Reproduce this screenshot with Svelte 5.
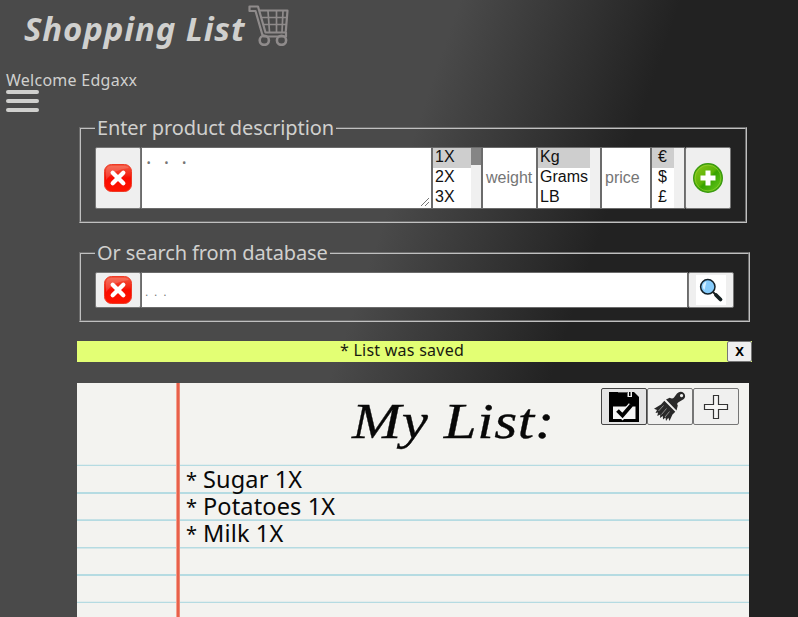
<script>
  const quantities = ['1X', '2X', '3X'];
  const units = ['Kg', 'Grams', 'LB'];
  const currencies = ['€', '$', '£'];
  const items = ['Sugar 1X', 'Potatoes 1X', 'Milk 1X'];
</script>

{#snippet clearIcon()}
  <svg width="30" height="30" viewBox="0 0 30 30">
    <defs>
      <linearGradient id="red" x1="0" y1="0" x2="0" y2="1">
        <stop offset="0" stop-color="#f4583f" />
        <stop offset=".4" stop-color="#f32414" />
        <stop offset=".5" stop-color="#f90b00" />
        <stop offset="1" stop-color="#ff1400" />
      </linearGradient>
    </defs>
    <rect x="1.5" y="1.5" width="27" height="27" rx="7" fill="url(#red)" stroke="#ee3a26" />
    <path d="M3 17V8q0-5 5-5h14q3 0 4 2Q11 6 3 17z" fill="#fff" opacity=".16" />
    <path d="M9.700 9.700l10.600 10.600M20.300 9.700L9.700 20.300" stroke="#fff" stroke-width="4.300" stroke-linecap="round" />
  </svg>
{/snippet}

{#snippet listbox(options, cls, thumb)}
  <div class="listbox {cls}">
    <div class="options">
      {#each options as option, i}
        <div class="option" class:selected={i === 0}>{option}</div>
      {/each}
    </div>
    <div class="track">{#if thumb}<div class="thumb"></div>{/if}</div>
  </div>
{/snippet}

<div class="page">
  <header>
    <h1>Shopping List</h1>
    <svg class="cart" width="42" height="41" viewBox="0 0 42 41" fill="none" stroke="#8f8b8b">
      <path d="M1.500 1.500h8.500l7.500 26h20.500v4H17.500q-3 0-3.500-3L7.500 6h-6zM11.300 5.500H39.500l-1.700 21" stroke-width="2.200" stroke-linejoin="round" />
      <path d="M20 6l1.500 21M28.500 6v21M35 6l-1 21M13.500 12.500h25.500M15.500 19.500h23" stroke-width="1.700" />
      <circle cx="16.300" cy="35.300" r="4.600" stroke-width="2.600" />
      <circle cx="33.500" cy="35.300" r="4.600" stroke-width="2.600" />
    </svg>
  </header>
  <div class="welcome">Welcome Edgaxx</div>
  <div class="menu"><i></i><i></i><i></i></div>

  <main>
    <fieldset class="describe">
      <legend>Enter product description</legend>
      <div class="row">
        <button class="side">{@render clearIcon()}</button>
        <div class="area">
          <span>. . .</span>
          <svg width="10" height="10" viewBox="0 0 10 10" stroke="#777"><path d="M1 9L9 1M5 9L9 5" /></svg>
        </div>
        {@render listbox(quantities, 'qty', true)}
        <div class="field weight">weight</div>
        {@render listbox(units, 'unit', false)}
        <div class="field price">price</div>
        {@render listbox(currencies, 'cur', false)}
        <button class="side">
          <svg width="32" height="32" viewBox="0 0 32 32">
            <defs>
              <linearGradient id="green" x1="0" y1="0" x2="1" y2="1">
                <stop offset="0" stop-color="#8fc61c" />
                <stop offset=".48" stop-color="#59b306" />
                <stop offset=".54" stop-color="#36a200" />
                <stop offset="1" stop-color="#70d020" />
              </linearGradient>
            </defs>
            <circle cx="16" cy="16" r="14.300" fill="url(#green)" stroke="#3b9a10" stroke-width="1.400" />
            <circle cx="16" cy="16" r="12.900" fill="none" stroke="#a5da3b" stroke-width="1" opacity=".5" />
            <path d="M16 8.500v15M8.500 16h15" stroke="#fff" stroke-width="5" />
          </svg>
        </button>
      </div>
    </fieldset>

    <fieldset class="search">
      <legend>Or search from database</legend>
      <div class="row">
        <button class="side">{@render clearIcon()}</button>
        <div class="field query">. . .</div>
        <button class="side">
          <svg class="lens" width="30" height="30" viewBox="0 0 30 30">
            <rect width="30" height="30" fill="#fff" />
            <path d="M17 17l3 3" stroke="#222" stroke-width="2" />
            <path d="M20 20l4.500 4.500" stroke="#152022" stroke-width="3.800" stroke-linecap="round" />
            <circle cx="11.800" cy="11.800" r="7.200" fill="#86cbfb" stroke="#132028" stroke-width="1.500" />
            <path d="M7 13q-1-5 3.500-6.500L8.500 15z" fill="#d4efff" />
          </svg>
        </button>
      </div>
    </fieldset>

    <div class="notice">
      <div class="message">* List was saved</div>
      <button>X</button>
    </div>

    <section class="paper">
      <h2><span>My List:</span></h2>
      <div class="tools">
        <button class="active">
          <svg width="32" height="32" viewBox="0 0 32 32">
            <path d="M1 1h25l5 5v25H1z" fill="#000" />
            <path d="M19.500 1h4.500v5h-4.500z" fill="#eee" />
            <path d="M21 1h1.500v4H21z" fill="#000" />
            <path d="M10 1h9.500v1H10z" fill="#555" />
            <path d="M5 15.500h22.500V28H5z" fill="#f5f5f5" />
            <path d="M10 20l4.500 4.500 9-10" stroke="#f5f5f5" stroke-width="7" fill="none" />
            <path d="M9.500 19.500l5 5 9-10.500" stroke="#000" stroke-width="3.800" fill="none" />
          </svg>
        </button>
        <button>
          <svg width="34" height="34" viewBox="0 0 34 34" fill="#292929">
            <path fill-rule="evenodd" d="M13 9.500L16.700 7.800Q19.500 9.500 21 7.500L24 3.500Q27.500.3 31 3.200Q33.500 6.500 30.500 9.300Q28 11 25.500 12.200Q23.300 13.500 24.800 15.500L23.500 20.500zM28.500 4a1.600 1.600 0 1 0 .1 0z" />
            <path d="M11.300 10.800L22.300 21.700L19.500 24.500L16.500 31L15.300 27.800L13 31L12.500 27.500L10 29.500L9.800 26L7 28L7.300 24.500L4.300 26L5 22.500L2.500 23L4 20L1 18.800L8 14.500z" />
            <path d="M10.500 15.500l-5 5.500M13.500 18.500l-5 6M16.500 21.500l-4.500 5.500" stroke="#f0f0ef" stroke-width=".5" />
          </svg>
        </button>
        <button>
          <svg width="26" height="26" viewBox="0 0 26 26"><path d="M10.500 1.500h5v9h9v5h-9v9h-5v-9h-9v-5h9z" fill="#f6f6f5" stroke="#333" stroke-width="1.200" /></svg>
        </button>
      </div>
      <ul>
        {#each items as item}
          <li><span class="star">*</span><span class="name">{item}</span></li>
        {/each}
      </ul>
    </section>
  </main>
</div>

<style>
  :global(body) { margin: 0; overflow: hidden; }
  .page {
    box-sizing: border-box;
    width: 798px;
    height: 617px;
    overflow: hidden;
    color: #d0d0ce;
    font-family: 'Noto Sans', 'Open Sans', sans-serif;
    background: linear-gradient(109deg, #4a4a4a 435px, #222 644px);
  }
  header { display: flex; height: 70px; padding-left: 24px; }
  h1 { margin: 7px 0 0; width: 224px; font-size: 33px; line-height: 44px; font-style: italic; font-weight: 700; letter-spacing: .850px; white-space: nowrap; }
  .cart { margin-top: 5px; }
  .welcome { height: 20px; padding-left: 6px; font-size: 16px; line-height: 20px; letter-spacing: .26px; }
  .menu { display: flex; flex-direction: column; gap: 5px; width: 33px; margin-left: 6px; }
  .menu i { height: 4px; border-radius: 2px; background: #d0d0ce; }
  main { margin-left: 77px; padding-top: 6px; width: 675px; }
  fieldset { box-sizing: border-box; margin: 0 0 0 2px; padding: 0 14px; border: 2px groove #c0c0c0; min-width: 0; }
  legend { padding: 0 2px; margin: 0; font-size: 20px; line-height: 20px; letter-spacing: -.11px; white-space: nowrap; }
  .describe { width: 668px; height: 105px; }
  .search { width: 671px; height: 79px; margin-top: 20px; }
  .row { display: flex; margin-top: 9px; width: 636px; height: 62px; }
  .search .row { width: 639px; height: 36px; }
  button { box-sizing: border-box; padding: 0; display: flex; align-items: center; justify-content: center; border: 1px solid #767676; border-radius: 2px; background: #efefef; color: #000; flex: none; }
  .side { width: 46px; }
  .area, .field, .listbox { box-sizing: border-box; border: 1px solid #6b6b6b; background: #fff; flex: none; }
  .area { width: 291px; display: flex; align-items: flex-end; justify-content: space-between; padding: 0 1px 1px 4px; color: #757575; font: 20px/24px 'Noto Sans', sans-serif; }
  .area span { align-self: flex-start; margin-top: -3px; letter-spacing: 3.600px; }
  .listbox { display: flex; color: #111; font: 16px/20px 'Liberation Sans', Arial, sans-serif; overflow: hidden; }
  .options { flex: 1; }
  .option { height: 20px; line-height: 18px; padding-left: 2px; }
  .selected { background: #cecece; }
  .track { width: 10px; background: #f0f0f0; }
  .thumb { height: 17px; background: #858585; }
  .qty { width: 50px; }
  .unit { width: 64px; }
  .cur { width: 34px; }
  .cur .option { padding-left: 6px; }
  .field { display: flex; align-items: center; padding-left: 3px; color: #757575; font: 16px 'Liberation Sans', Arial, sans-serif; }
  .weight { width: 55px; }
  .price { width: 50px; }
  .query { width: 547px; font-size: 12px; letter-spacing: 1.200px; padding-top: 3px; }
  .notice { display: flex; margin-top: 19px; height: 21px; width: 675px; background: #e3ff74; color: #191b10; }
  .message { flex: 1; text-align: center; font-size: 16px; line-height: 18px; letter-spacing: .25px; }
  .notice button { width: 25px; font: bold 13px/19px 'Noto Sans', sans-serif; }
  .paper {
    position: relative;
    margin-top: 21px;
    width: 672px;
    height: 234px;
    color: #080808;
    background:
      linear-gradient(90deg, transparent 99px, #f3a08e 99.500px, #e8604a 100.500px, #e8604a 102px, #f3b0a0 103px, transparent 103.500px),
      repeating-linear-gradient(transparent 0 25.400px, #b5dbe2 25.800px 27.200px, transparent 27.400px) 0 56px no-repeat,
      #f3f3f0;
  }
  h2 { margin: 0; height: 83px; padding-left: 275px; font: italic 50px/76px 'Liberation Serif', 'Times New Roman', serif; -webkit-text-stroke: .3px #080808; }
  h2 span { display: inline-block; transform: scaleX(1.180); transform-origin: 0 50%; letter-spacing: .500px; }
  .tools { position: absolute; left: 524px; top: 5px; display: flex; }
  .tools button { width: 46px; height: 37px; background: #f0f0ef; }
  .tools .active { background: #e4e4e4; border-color: #444; }
  ul { list-style: none; margin: 0; padding: 0 0 0 109px; font-size: 23.500px; line-height: 27px; }
  li { display: flex; height: 27px; white-space: nowrap; }
  .star { width: 17px; font-size: 20px; }
  .name { letter-spacing: .15px; }
</style>
